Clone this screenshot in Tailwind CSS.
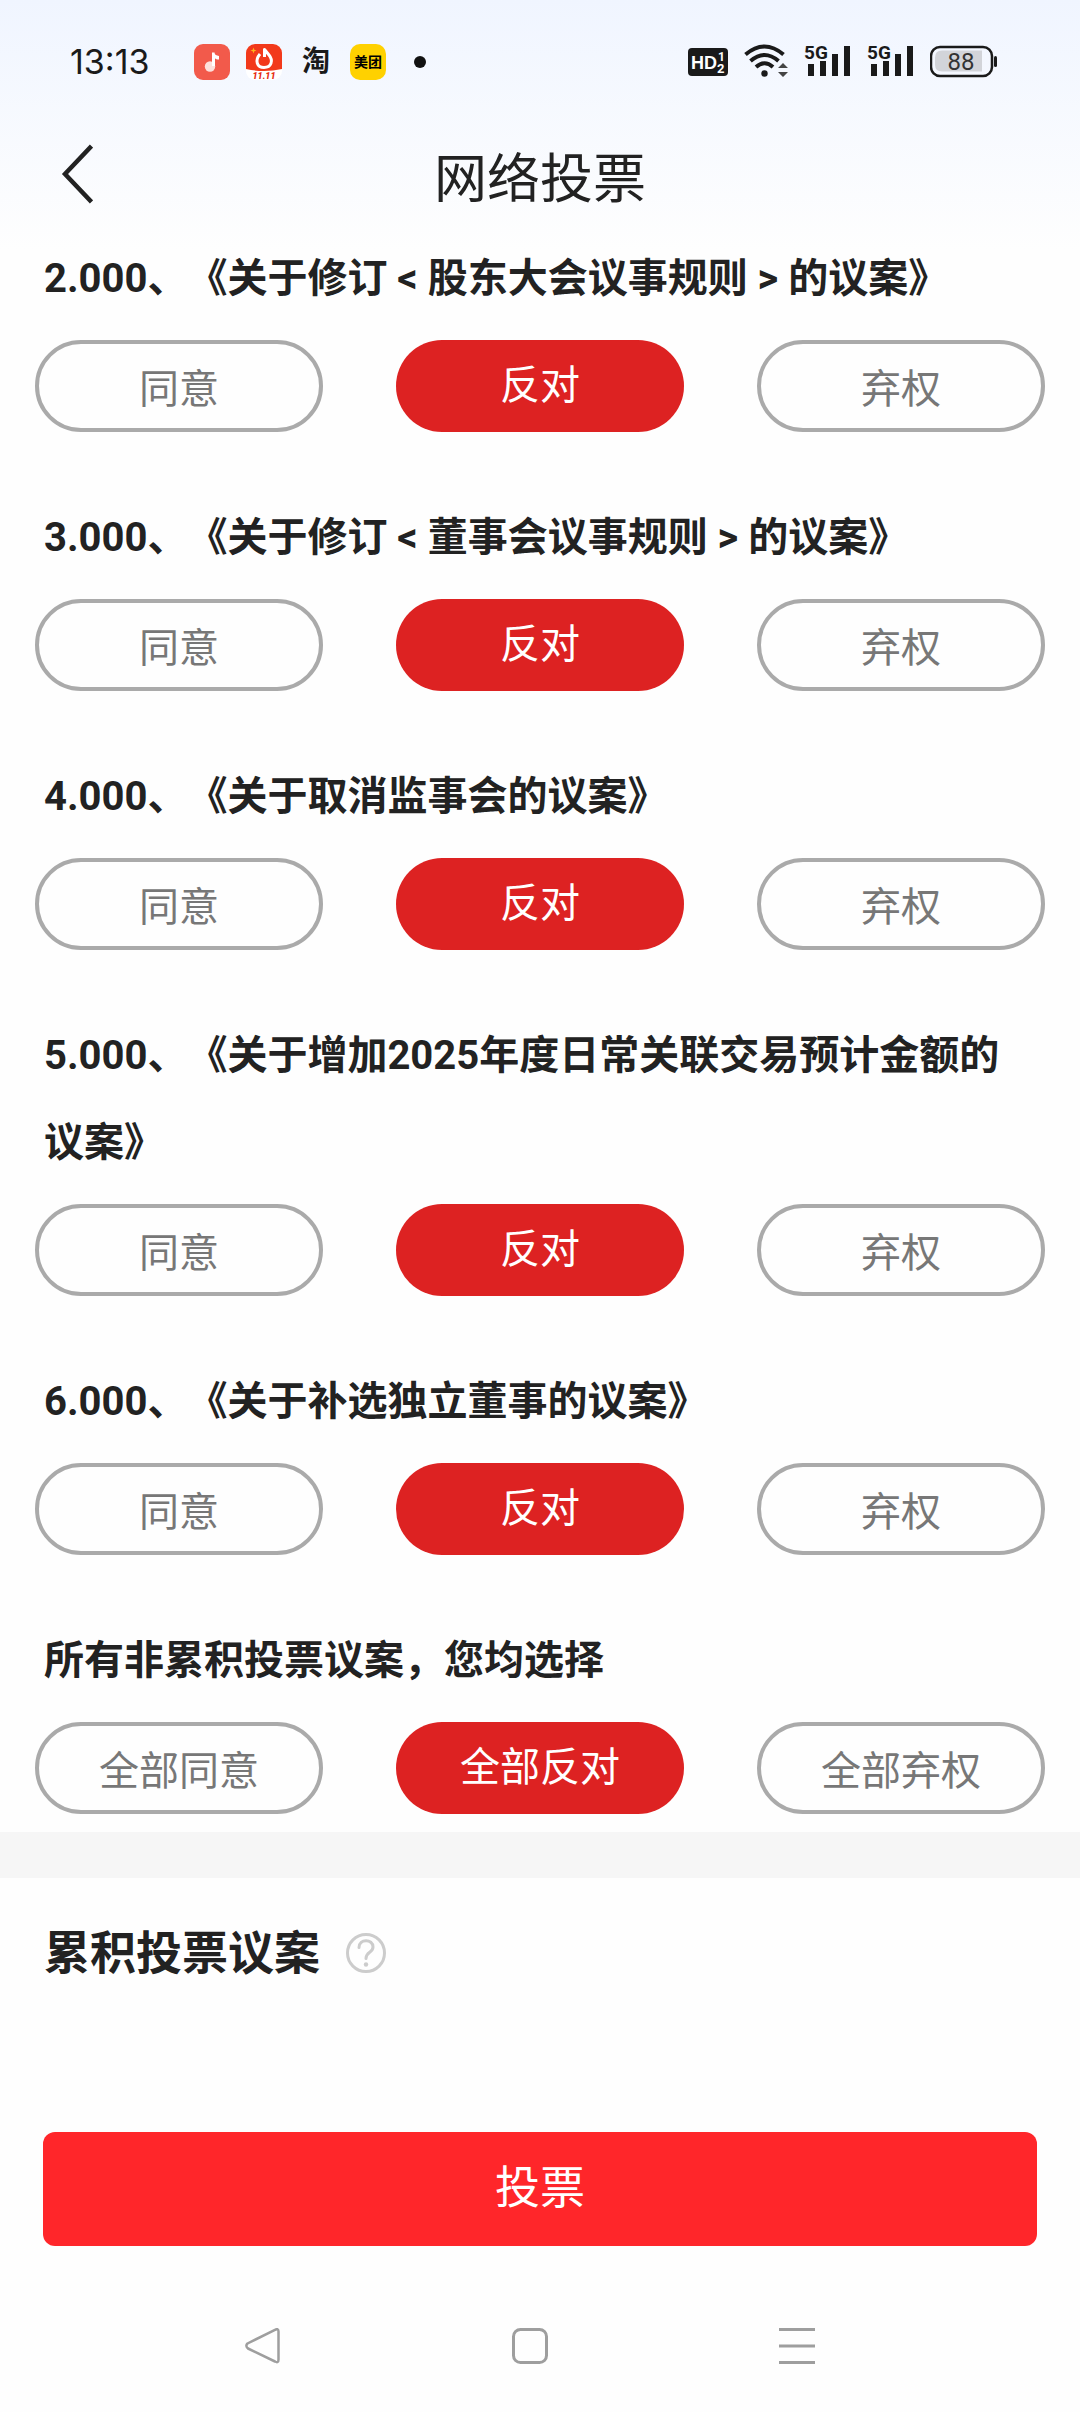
<!DOCTYPE html>
<html lang="zh-CN">
<head>
    <meta charset="UTF-8">
    <meta name="viewport" content="width=device-width, initial-scale=1.0">
    <title>网络投票</title>
    <script src="https://cdn.jsdelivr.net/npm/@tailwindcss/browser@4"></script>
</head>
<body class="bg-[#fefefe] text-[#222222] font-[Roboto,'Noto_Sans_CJK_SC',sans-serif] [text-spacing-trim:space-all]">

    <div class="min-h-screen flex flex-col bg-[linear-gradient(#f0f5ff,#fefefe_250px)]">

        <!-- status bar -->
        <div class="h-[124px] pl-[70px] pr-[83px] flex items-center justify-between text-[#1a1a1a]">
            <div class="flex items-center">
                <span class="w-[124px] text-[34px] leading-9 font-[Inter,sans-serif]">13:13</span>
                <div class="flex items-center gap-4">
                    <svg class="size-9" viewBox="0 0 36 36">
                        <rect width="36" height="36" rx="9" fill="#f25a4b"/>
                        <circle cx="16" cy="22.500" r="5.200" fill="#fde0dc"/>
                        <path d="M18 22V8.500h2.500c0 2.500 2 3 4.500 3.500v3.500c-2 0-3.600-.6-4-1.300V22z" fill="#fff"/>
                    </svg>
                    <svg class="size-9" viewBox="0 0 36 36">
                        <clipPath id="shopIcon"><rect width="36" height="36" rx="9"/></clipPath>
                        <g clip-path="url(#shopIcon)">
                            <rect width="36" height="36" fill="#fff"/>
                            <path d="M0 0h36v25q-18 4-36 0z" fill="#f2391b"/>
                            <path d="M14 10c-5.500 6.500-3 13.500 4 13.500 7.500 0 9.500-7 5-12.500L18.500 5.500V13" fill="none" stroke="#fff" stroke-width="3" stroke-linejoin="round"/>
                            <path d="M7.500 3.500l.8 2.200 2.200.8-2.200.8-.8 2.200-.8-2.200-2.200-.8 2.200-.8z" fill="#ffb31a"/>
                            <text x="18" y="35" text-anchor="middle" font-family="Roboto" font-size="9" font-weight="900" font-style="italic" fill="#e62c10">11.11</text>
                        </g>
                    </svg>
                    <span class="w-9 text-center text-[28px] leading-9 font-bold">淘</span>
                    <span class="size-9 rounded-[10px] bg-[#ffd100] text-center text-[14px] leading-9 font-bold text-black">美团</span>
                    <svg class="size-9" viewBox="0 0 36 36"><circle cx="18" cy="18" r="6" fill="#111"/></svg>
                </div>
            </div>
            <div class="flex items-center gap-4">
                <svg class="w-10 h-9" viewBox="0 0 40 36">
                    <rect y="4" width="40" height="28" rx="4" fill="#1a1a1a"/>
                    <text x="3" y="25" font-family="Liberation Sans" font-size="18" font-weight="700" fill="#fff">HD</text>
                    <text x="30" y="17" font-family="Roboto" font-size="12" font-weight="700" fill="#fff">1</text>
                    <text x="29" y="29" font-family="Roboto" font-size="13" font-weight="700" fill="#fff">2</text>
                </svg>
                <svg class="w-[44px] h-9" viewBox="0 0 44 36">
                    <g fill="none" stroke="#1a1a1a" stroke-width="4">
                        <path d="M1.500 10.500q19-16 38 0"/>
                        <path d="M6.500 17q14-12 28 0"/>
                        <path d="M12 23q8.500-7.500 17 0"/>
                    </g>
                    <circle cx="20.500" cy="29.500" r="3.200" fill="#1a1a1a"/>
                    <path d="M34 24l5-5 5 5zM34 28h10l-5 5z" fill="#444"/>
                </svg>
                <svg class="w-[47px] h-12" viewBox="0 -6 47 48">
                    <path d="M4 20h6v12h-6zM16 17h6v15h-6zM28 10h6v22h-6zM40 2h6v30h-6z" fill="#1a1a1a"/>
                    <text x="0" y="15" font-family="Roboto" font-size="19" font-weight="700" fill="#1a1a1a">5G</text>
                </svg>
                <svg class="w-[47px] h-12" viewBox="0 -6 47 48">
                    <path d="M4 20h6v12h-6zM16 17h6v15h-6zM28 10h6v22h-6zM40 2h6v30h-6z" fill="#1a1a1a"/>
                    <text x="0" y="15" font-family="Roboto" font-size="19" font-weight="700" fill="#1a1a1a">5G</text>
                </svg>
                <svg class="w-[67px] h-9" viewBox="0 0 67 36">
                    <rect x="1" y="3" width="61" height="29" rx="9" fill="none" stroke="#1a1a1a" stroke-width="2.500"/>
                    <path d="M12 6.500h40v21h-40q-7 0-7-7v-7q0-7 7-7z" fill="#d2d4d9"/>
                    <rect x="64" y="12" width="3" height="11" rx="1.500" fill="#1a1a1a"/>
                    <text x="31" y="26" text-anchor="middle" font-family="Roboto" font-size="24" fill="#333">88</text>
                </svg>
            </div>
        </div>

        <!-- title bar -->
        <header class="h-[111px] px-11 grid grid-cols-3 items-start">
            <button class="w-16 h-[100px] pl-[17px]" aria-label="返回">
                <svg class="w-8 h-[60px]" viewBox="0 0 32 60" fill="none" stroke="#222222" stroke-width="4.500"><path d="M30.500 2L4 30l26.500 28"/></svg>
            </button>
            <h1 class="pt-4 text-center text-[53px] leading-[80px] whitespace-nowrap">网络投票</h1>
        </header>

        <main id="motions" class="px-[35px] pb-[18px] flex flex-col gap-[62px]"></main>

        <div class="h-[46px] bg-[#f6f6f6]"></div>

        <section class="grow px-11 pt-[40px] flex items-start gap-[26px]">
            <h2 class="text-[46px] leading-[70px] font-bold">累积投票议案</h2>
            <button class="h-[70px]" aria-label="帮助">
                <svg class="size-10" viewBox="0 0 40 40" fill="none" stroke="#cccccc" stroke-width="3" stroke-linecap="round">
                    <circle cx="20" cy="20" r="18.500"/>
                    <path d="M13 14.500c0-9 14-9 14-.5 0 6-7 4.500-7 11.500"/>
                    <circle cx="20" cy="31.500" r="2.200" fill="#cccccc" stroke="none"/>
                </svg>
            </button>
        </section>

        <div class="px-[43px]">
            <button class="w-full h-[114px] rounded-xl bg-[#ff262a] text-white text-[45px]">投票</button>
        </div>

        <!-- system navigation -->
        <nav class="h-[166px] pt-[82px] pl-[245px] pr-[265px] flex items-start justify-between">
            <button aria-label="后退">
                <svg class="size-9" viewBox="0 0 36 36" fill="none" stroke="#9e9e9e" stroke-width="2.500" stroke-linejoin="round"><path d="M2.500 15.500L30 1.800Q33.500 0 33.500 3.500V31.500Q33.500 35.500 30 33.500L3 20.500Q0 18 2.500 15.500z"/></svg>
            </button>
            <button aria-label="主页">
                <svg class="size-9" viewBox="0 0 36 36" fill="none" stroke="#9e9e9e" stroke-width="3"><rect x="1.500" y="1.500" width="33" height="33" rx="7"/></svg>
            </button>
            <button aria-label="菜单">
                <svg class="size-9" viewBox="0 0 36 36" fill="none" stroke="#9e9e9e" stroke-width="3"><path d="M0 1.500h36M0 18h36M0 34.500h36"/></svg>
            </button>
        </nav>
    </div>

    <script>
        const motions = [
            { title: '2.000、《关于修订 < 股东大会议事规则 > 的议案》' },
            { title: '3.000、《关于修订 < 董事会议事规则 > 的议案》' },
            { title: '4.000、《关于取消监事会的议案》' },
            { title: '5.000、《关于增加2025年度日常关联交易预计金额的议案》' },
            { title: '6.000、《关于补选独立董事的议案》' },
            { title: '所有非累积投票议案，您均选择', all: true }
        ];
        const options = ['同意', '反对', '弃权'];
        const votes = motions.map(() => '反对');

        const base = 'h-[92px] rounded-full text-[40px] leading-[60px]';
        const selected = 'bg-[#dd2222] text-white';
        const plain = 'border-4 border-[#aaaaaa] text-[#777777] pt-2';

        function vote(index, option) {
            votes[index] = option;
            if (motions[index].all) {
                votes.fill(option);
            }
            renderMotions();
        }

        function renderMotions() {
            const list = document.getElementById('motions');
            list.innerHTML = '';

            motions.forEach((motion, i) => {
                const item = document.createElement('section');
                const title = motion.title.replace('<', '&lt;').replace('>', '&gt;');
                item.innerHTML = `
                    <h2 class="px-[9px] mb-[18px] text-[40px] leading-[87px] font-bold">${title}</h2>
                    <div class="grid grid-cols-3 gap-[73px]">
                        ${options.map(option => `
                            <button onclick="vote(${i}, '${option}')" class="${base} ${votes[i] === option ? selected : plain}">${motion.all ? '全部' : ''}${option}</button>
                        `).join('')}
                    </div>
                `;
                list.appendChild(item);
            });
        }

        renderMotions();
    </script>
</body>
</html>
